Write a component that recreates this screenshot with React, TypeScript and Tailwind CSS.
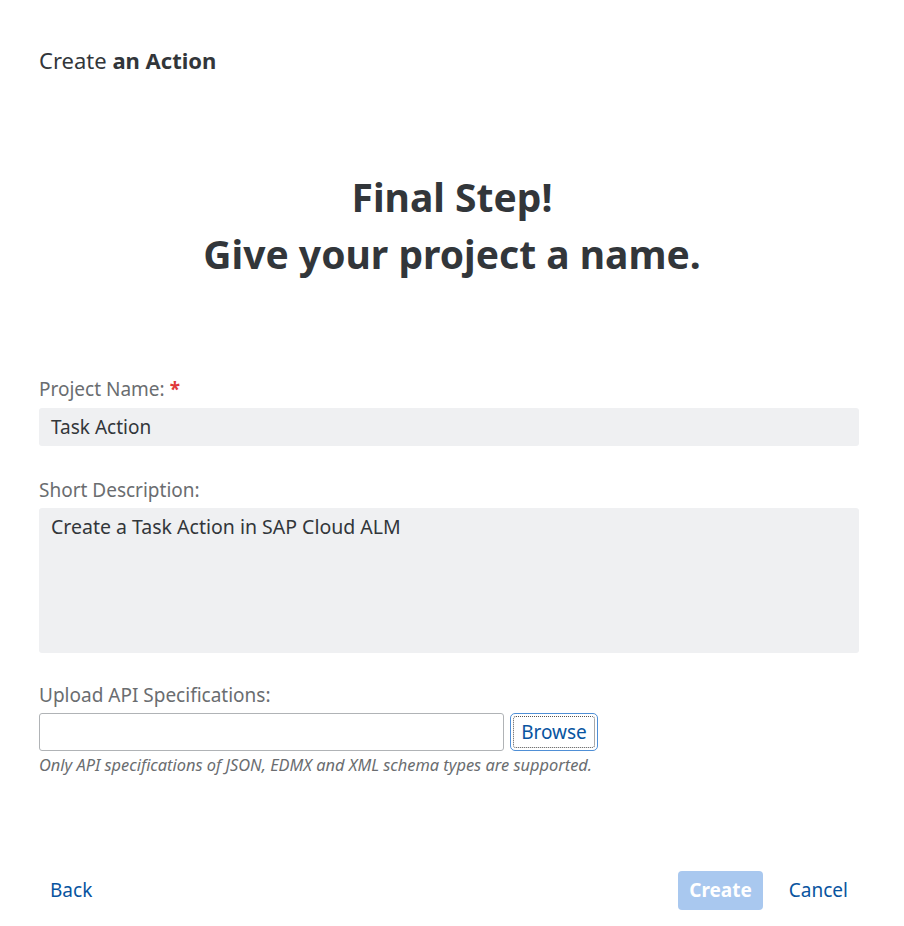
export default function App() {
  return (
    <div
      className="w-[904px] h-[926px] bg-white text-[#32363a] flex flex-col"
      style={{ fontFamily: '"Noto Sans", "Open Sans", Arial, sans-serif' }}
    >
      <div className="px-[39px] pt-[44px] text-[22px] leading-[32px]">
        Create <span className="font-bold">an Action</span>
      </div>

      <div className="mt-[92px] text-center text-[39px] font-bold leading-[57px]">
        <div>Final Step!</div>
        <div>Give your project a name.</div>
      </div>

      <div className="mt-[95px] px-[39px] flex flex-col">
        <label className="text-[19px] leading-[24px] text-[#6a6d70]">
          Project Name:<span className="text-[#e03a3a] font-bold ml-[5px]">*</span>
        </label>
        <div className="mt-[7px] h-[38px] w-[820px] rounded-[3px] bg-[#eff0f2] px-[12px] flex items-center text-[19px]">
          Task Action
        </div>

        <label className="mt-[32px] text-[19px] leading-[24px] text-[#6a6d70]">Short Description:</label>
        <div className="mt-[6px] h-[145px] w-[820px] rounded-[3px] bg-[#eff0f2] px-[12px] pt-[6px] text-[19.5px] leading-[26px]">
          Create a Task Action in SAP Cloud ALM
        </div>

        <label className="mt-[30px] text-[19px] leading-[24px] text-[#6a6d70]">Upload API Specifications:</label>
        <div className="mt-[6px] flex items-center gap-[6px]">
          <div className="h-[38px] w-[465px] rounded-[3px] border border-[#b0b3b6] bg-white" />
          <div className="h-[38px] w-[88px] rounded-[5px] border border-[#4f8fd6] p-[2px]">
            <div className="h-full w-full rounded-[3px] border border-dotted border-[#555] flex items-center justify-center text-[19px] text-[#0854a0]">
              Browse
            </div>
          </div>
        </div>
        <div className="mt-[4px] text-[16.4px] italic text-[#6a6d70] leading-[20px]">
          Only API specifications of JSON, EDMX and XML schema types are supported.
        </div>
      </div>

      <div className="mt-auto mb-[16px] pl-[39px] pr-[45px] flex items-center">
        <button className="px-[11px] h-[38px] text-[19px] text-[#0854a0]">Back</button>
        <div className="ml-auto flex items-center gap-[15px]">
          <button className="h-[39px] px-[11px] rounded-[4px] bg-[#a9c8ef] text-white font-bold text-[19px]">Create</button>
          <button className="h-[38px] px-[11px] text-[19px] text-[#0854a0]">Cancel</button>
        </div>
      </div>
    </div>
  );
}
